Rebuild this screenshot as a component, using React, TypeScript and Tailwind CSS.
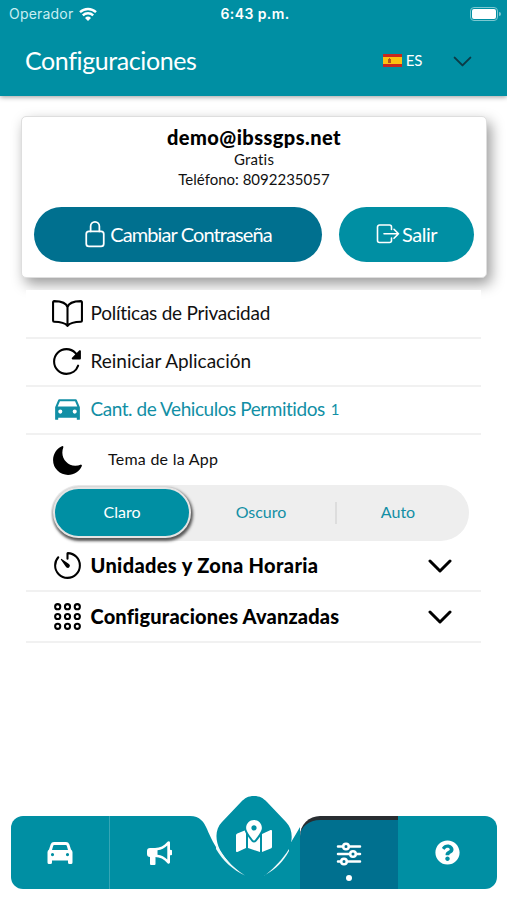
import { useState } from "react";
import type { ReactNode } from "react";
import { FaMapMarkedAlt, FaQuestionCircle } from "react-icons/fa";
import {
  IoAppsOutline,
  IoBookOutline,
  IoCarSharp,
  IoLockClosedOutline,
  IoMoon,
  IoTimerOutline,
  IoReload,
} from "react-icons/io5";

function Chevron({ className }: { className: string }) {
  return (
    <svg
      viewBox="0 0 24 14"
      fill="none"
      stroke="currentColor"
      strokeLinecap="round"
      strokeLinejoin="round"
      className={className}
    >
      <path d="M2 2l10 10L22 2" />
    </svg>
  );
}

function Flag() {
  return (
    <svg viewBox="0 0 19 13" className="h-[13px] w-[19px]">
      <path fill="#c8281e" d="M0 0h19v13H0z" />
      <path fill="#fcc010" d="M0 3h19v7H0z" />
      <path fill="#b5521b" d="M5 5h3v4H5zM6 4h1v1H6z" />
    </svg>
  );
}

function WifiIcon() {
  return (
    <svg viewBox="0 0 18 14" fill="none" stroke="currentColor" className="h-[14px] w-[18px]">
      <path strokeWidth="2.4" d="M1 5.2a11.5 11.5 0 0 1 16 0" />
      <path strokeWidth="2.4" d="M3.8 8.300a7.500 7.500 0 0 1 10.400 0" />
      <path fill="currentColor" stroke="none" d="M9 14l-3-3.100a4.400 4.400 0 0 1 6 0z" />
    </svg>
  );
}

function ExitIcon() {
  return (
    <svg
      viewBox="0 0 24 22"
      fill="none"
      stroke="currentColor"
      strokeWidth="1.6"
      strokeLinecap="round"
      strokeLinejoin="round"
      className="h-[22px] w-6"
    >
      <path d="M15.5 6.5V4a2 2 0 0 0-2-2H3.5a2 2 0 0 0-2 2v13.5a2 2 0 0 0 2 2h10a2 2 0 0 0 2-2V15" />
      <path d="M8 10.8H22.5M18 6.300l4.500 4.500-4.500 4.500" />
    </svg>
  );
}

function CarIcon() {
  return (
    <svg viewBox="0 0 26 22" fill="currentColor" className="h-[22px] w-[26px]">
      <path
        fillRule="evenodd"
        d="M7 0h12a3.500 3.500 0 0 1 3.300 2.300L24 7.500a3.500 3.500 0 0 1 1.500 3V20.500a1.500 1.500 0 0 1-1.500 1.500h-1.500a1.500 1.500 0 0 1-1.500-1.500V18.500H5V20.500A1.500 1.500 0 0 1 3.500 22H2A1.500 1.500 0 0 1 .5 20.500V10.500a3.500 3.500 0 0 1 1.500-3L3.700 2.300A3.500 3.500 0 0 1 7 0zM7.200 3a1 1 0 0 0-1 .7L5 8h16l-1.200-4.300a1 1 0 0 0-1-.7zM5.500 11a1.600 1.600 0 1 0 0 3.200 1.600 1.600 0 0 0 0-3.200zM20.500 11a1.600 1.600 0 1 0 0 3.200 1.600 1.600 0 0 0 0-3.200z"
      />
    </svg>
  );
}

function MegaphoneIcon() {
  return (
    <svg viewBox="0 0 26 26" fill="currentColor" className="h-[26px] w-[26px]">
      <path d="M4 8h6v9H9.500v7a1 1 0 0 1-1 1H5a1 1 0 0 1-1-1v-7a3 3 0 0 1-3-3v-3a3 3 0 0 1 3-3z" />
      <path
        fillRule="evenodd"
        d="M9 8c5 0 9-2 12.5-6.200 1-1 2.500-.5 2.500.9v7a2.800 2.800 0 0 1 0 5.600v7c0 1.400-1.500 1.900-2.500.9C18 19 14 17 9 17zm2.500 2.300v4.400c4 .5 7 2.200 9.800 4.800V5.500c-2.800 2.600-5.800 4.300-9.800 4.800z"
      />
    </svg>
  );
}

function SlidersIcon() {
  return (
    <svg
      viewBox="0 0 26 24"
      fill="none"
      stroke="currentColor"
      strokeWidth="2.5"
      strokeLinecap="round"
      className="h-6 w-[26px]"
    >
      <path d="M2 4.5h5M13 4.5h11M2 12h12M20 12h4M2 19.5h3M11 19.5h13" />
      <circle cx="10" cy="4.5" r="2.8" />
      <circle cx="17" cy="12" r="2.8" />
      <circle cx="8" cy="19.5" r="2.8" />
    </svg>
  );
}

function Header() {
  return (
    <header className="h-24 bg-[#008fa3] text-white shadow-[0_1px_5px_rgba(0,0,0,0.4)]">
      <div className="grid h-[27px] grid-cols-3 items-center pr-1.5 pl-[9px] font-['Inter']">
        <div className="flex items-center gap-1.5 text-[14px] tracking-[0.2px] text-[#c9eef2]">
          Operador
          <span className="text-white">
            <WifiIcon />
          </span>
        </div>
        <div className="text-center text-[14px] font-semibold tracking-[0.4px]">
          6:43 p.m.
        </div>
        <div className="flex items-center justify-end gap-px">
          <div className="h-[14px] w-[28px] rounded-[4px] border border-[#7cc8d1] p-px">
            <div className="h-full rounded-[2px] bg-white" />
          </div>
          <div className="h-1 w-[2px] rounded-r bg-[#7cc8d1]" />
        </div>
      </div>
      <div className="flex h-[67px] items-center pr-[35px] pl-[25px]">
        <h1 className="flex-1 text-[25px] tracking-[-0.4px]">Configuraciones</h1>
        <Flag />
        <span className="ml-1 text-[15px] tracking-[-0.3px]">ES</span>
        <Chevron className="mt-px ml-[31px] h-[11px] w-[19px] stroke-[2.5] text-[#0b3b46]" />
      </div>
    </header>
  );
}

function AccountCard() {
  return (
    <section className="mx-5 mt-5 ml-[21px] h-[162px] rounded-[5px] border border-[#dedede] bg-white text-center shadow-[4px_6px_14px_rgba(0,0,0,0.4)]">
      <div className="pt-2 text-[20px] leading-6 font-black tracking-[0.45px] text-black">
        demo@ibssgps.net
      </div>
      <div className="text-[15px] leading-5 tracking-[0.2px]">Gratis</div>
      <div className="text-[15px] leading-5">Teléfono: 8092235057</div>
      <div className="mt-[18px] flex gap-[17px] px-3 text-[20px] leading-6 text-white">
        <button className="flex h-[55px] w-[288px] items-center justify-center gap-px rounded-full bg-[#00708f] pr-[3px] pb-px tracking-[-0.9px]">
          <IoLockClosedOutline className="h-[28px] w-[28px]" />
          Cambiar Contraseña
        </button>
        <button className="flex h-[55px] flex-1 items-center justify-center gap-[2px] rounded-full bg-[#008fa3] pb-[2px] tracking-[-0.5px]">
          <ExitIcon />
          Salir
        </button>
      </div>
    </section>
  );
}

interface RowProps {
  icon: ReactNode;
  children: ReactNode;
  className: string;
}

function Row({ icon, children, className }: RowProps) {
  return (
    <div className={`flex items-center border-b-2 border-[#f1f1f1] pl-[25px] ${className}`}>
      <div className="flex w-[39.5px]">{icon}</div>
      {children}
    </div>
  );
}

const themes = ["Claro", "Oscuro", "Auto"];

function ThemePicker() {
  const [theme, setTheme] = useState("Claro");

  return (
    <div className="mr-3 ml-[25px] flex h-14 rounded-full bg-[#eeeeee] text-[16px] leading-5">
      {themes.map((name) => (
        <button
          key={name}
          onClick={() => setTheme(name)}
          className={
            name === theme
              ? "m-[2px] mb-[3px] w-[138px] rounded-full border-2 border-[#e4e4e4] bg-[#008fa3] pb-px text-white shadow-[1px_2px_3px_1px_#555555]"
              : "my-[17px] flex-1 border-[#dddddd] pr-1.5 pb-1 text-[#128fa5] last:flex-none last:w-[134px] last:border-l-2 last:pr-2.5"
          }
        >
          {name}
        </button>
      ))}
    </div>
  );
}

function Settings() {
  return (
    <main className="relative mt-3 mr-[26px] ml-[26px] bg-white text-[19px] text-[#111111]">
      <Row
        icon={<IoBookOutline className="h-[33px] w-[33px] text-black" />}
        className="h-[49px] pb-px tracking-[-0.25px]"
      >
        Políticas de Privacidad
      </Row>
      <Row
        icon={<IoReload className="h-[33px] w-[33px] text-black" />}
        className="h-12 pb-px tracking-[-0.02px]"
      >
        Reiniciar Aplicación
      </Row>
      <Row
        icon={<IoCarSharp className="h-[33px] w-[33px]" />}
        className="h-12 pb-px tracking-[-0.45px] text-[#128fa5]"
      >
        Cant. de Vehiculos Permitidos <span className="ml-1.5 text-[15px]">1</span>
      </Row>
      <div className="flex h-[50px] items-center pl-[25px]">
        <IoMoon className="h-[33px] w-[33px] text-black" />
        <span className="ml-6 pb-[2px] text-[16px] tracking-[0.25px]">Tema de la App</span>
      </div>
      <ThemePicker />
      <Row
        icon={<IoTimerOutline className="h-[33px] w-[33px]" />}
        className="h-[51px] text-[20px] leading-6 font-black tracking-[0.35px] text-black"
      >
        <span className="flex-1 pb-[2px]">Unidades y Zona Horaria</span>
        <Chevron className="mr-[29px] h-[14px] w-6 stroke-3" />
      </Row>
      <Row
        icon={<IoAppsOutline className="h-[33px] w-[33px]" />}
        className="h-[51px] text-[20px] leading-6 font-black tracking-[0.18px] text-black"
      >
        <span className="flex-1 pb-[2px]">Configuraciones Avanzadas</span>
        <Chevron className="mr-[29px] h-[14px] w-6 stroke-3" />
      </Row>
    </main>
  );
}

function TabBar() {
  return (
    <nav className="mx-[11px] mt-auto mb-[11px] flex h-[73px] w-[486px] text-white">
      <button className="flex w-[99px] items-center justify-center rounded-l-xl border-r border-[#35a6b5] bg-[#008fa3]">
        <CarIcon />
      </button>
      <button className="flex w-[80px] items-center bg-[#008fa3] pl-9">
        <MegaphoneIcon />
      </button>
      <button className="relative w-[110px]">
        {/* bar with the notch first, then the diamond sitting in it */}
        <svg viewBox="0 0 110 93" className="absolute bottom-0 left-0 h-[93px] w-[110px]">
          <path
            fill="#008fa3"
            d="M0 20C10 20 14 26 17 33C24 50 34 67 56 80H74C86 71 98 52 110 31V93H0Z"
          />
          <path
            fill="#008fa3"
            d="M64 0C70 0 73 2 77 6L96 26C103 33 103 44 99 53C92 65 84 73 73 81H56C45 74 36 64 30 54C25 44 25 33 32 26L51 6C55 2 58 0 64 0Z"
          />
          <path fill="#eef9fa" d="M26 48C33 61 42 71 55 79.500C43 74 33 65 26 53Z" />
          <path fill="#eef9fa" d="M99 53C92 64 85 71 76 78.500C86 73 93 66 99 55Z" />
        </svg>
        <FaMapMarkedAlt className="absolute top-[2px] left-[46px] h-9 w-9" />
      </button>
      <button className="flex w-[98px] flex-col items-center rounded-tl-[20px] border-t-4 border-[#282d31] bg-[#00708f] pt-[22px]">
        <SlidersIcon />
        <span className="mt-[9px] h-[6px] w-[6px] rounded-full bg-white" />
      </button>
      <button className="flex flex-1 items-center justify-center rounded-r-xl bg-[#008fa3]">
        <FaQuestionCircle className="h-[25px] w-[25px]" />
      </button>
    </nav>
  );
}

export default function App() {
  return (
    <div className="flex h-[900px] w-[507px] flex-col overflow-hidden bg-white font-['Lato','Liberation_Sans',sans-serif] text-[#111111]">
      <Header />
      <AccountCard />
      <Settings />
      <TabBar />
    </div>
  );
}
